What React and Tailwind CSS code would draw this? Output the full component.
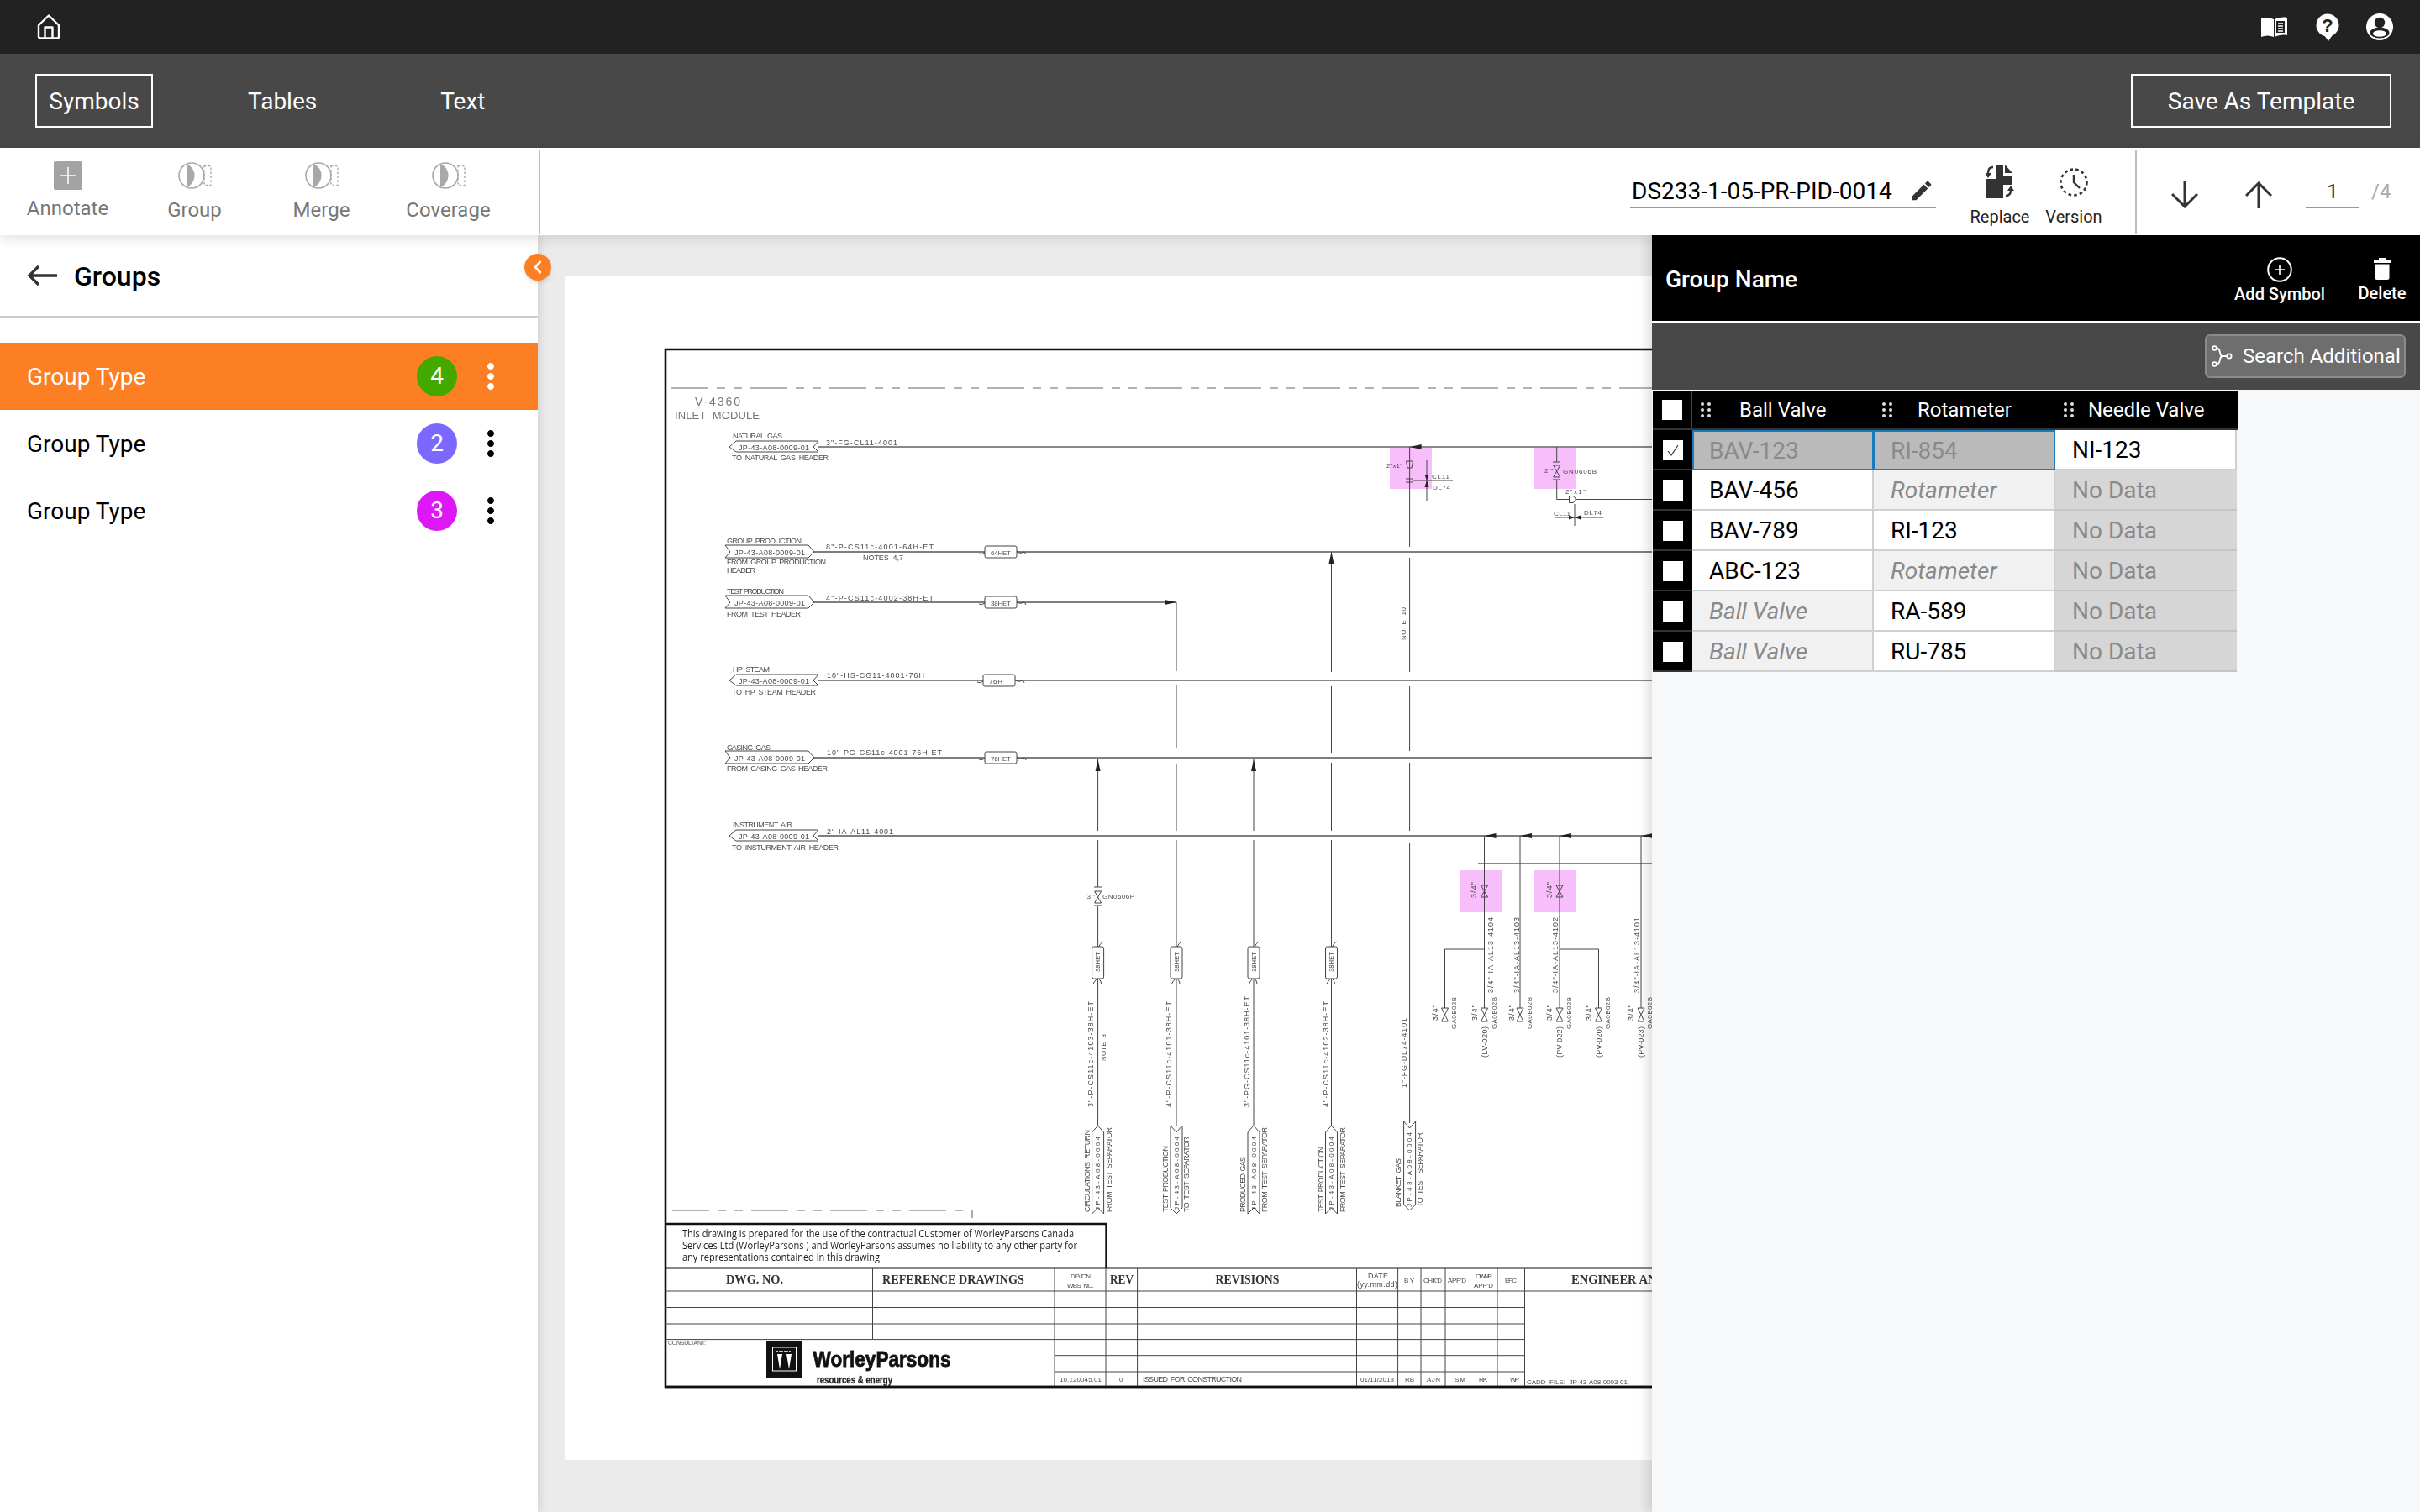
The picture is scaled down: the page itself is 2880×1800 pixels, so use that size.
import React from "react";
import { MdEdit, MdMoreVert } from "react-icons/md";

// ---------- small icons ----------
const HomeIcon = () => (
  <svg width="28" height="30" viewBox="0 0 28 30" fill="none" stroke="white" strokeWidth="2.4" strokeLinejoin="round">
    <path d="M14 1.5 L26 13 V26.5 Q26 28.5 24 28.5 H4 Q2 28.5 2 26.5 V13 Z" />
    <path d="M9.5 28 V15.5 H18.5 V28" />
  </svg>
);

const BookIcon = () => (
  <svg width="32" height="24" viewBox="0 0 32 24">
    <path d="M0 2 C5 0 10 1 15 3 V24 C10 22 5 22 0 24 Z" fill="white" />
    <path d="M16 3 C20 1 26 0 31 1 V22 C26 21 20 22 16 24 Z" fill="white" />
    <rect x="18" y="5" width="10" height="14" fill="#222" />
    <path d="M20 8 H26 M20 11 H26 M20 14 H26 M20 17 H26" stroke="white" strokeWidth="1.7" />
  </svg>
);

const HelpIcon = () => (
  <svg width="28" height="33" viewBox="0 0 28 33">
    <circle cx="14" cy="14" r="13.5" fill="white" />
    <path d="M10 26 L15 33 L21 24 Z" fill="white" />
    <text x="14" y="22" textAnchor="middle" fontSize="22" fontWeight="900" fontFamily="Liberation Sans" fill="#222">?</text>
  </svg>
);

const UserIcon = () => (
  <svg width="32" height="32" viewBox="0 0 32 32">
    <circle cx="16" cy="16" r="16" fill="white" />
    <circle cx="16" cy="11" r="6.2" fill="#222" />
    <ellipse cx="16" cy="23" rx="11.5" ry="6.5" fill="#222" />
    <ellipse cx="16" cy="24" rx="8" ry="3.8" fill="white" />
  </svg>
);

const AnnotateIcon = () => (
  <div className="w-[34px] h-[34px] bg-[#a3a3a3] rounded-[2px] flex items-center justify-center">
    <svg width="20" height="20" viewBox="0 0 20 20" stroke="white" strokeWidth="1.5">
      <path d="M10 0 V20 M0 10 H20" />
    </svg>
  </div>
);

const GroupIcon = () => (
  <svg width="40" height="32" viewBox="0 0 40 32" fill="none">
    <path d="M10 2 A15 15 0 0 1 10 30 Z" fill="#a8a8a8" />
    <circle cx="16" cy="16" r="15" stroke="#a8a8a8" strokeWidth="1.6" />
    <rect x="31" y="4.5" width="8" height="23" stroke="#a8a8a8" strokeWidth="1.4" strokeDasharray="2.5 2.5" />
  </svg>
);

const ReplaceIcon = () => (
  <svg width="34" height="40" viewBox="0 0 34 40" fill="#333">
    <path d="M12 0 H21 V13 H32 V24 H21 V40 H1 V17 H12 Z" />
    <path d="M23 0 L32 10 H23 Z" />
    <path d="M9 3 C4 3 3 6 3 11" fill="none" stroke="#333" strokeWidth="2.4" />
    <path d="M-1 10 H7 L3 16 Z" />
    <path d="M24 37 C29 37 30 34 30 30" fill="none" stroke="#333" strokeWidth="2.4" />
    <path d="M26 31 H34 L30 25 Z" />
  </svg>
);

const VersionIcon = () => (
  <svg width="34" height="34" viewBox="0 0 34 34" fill="none" stroke="#333">
    <circle cx="17" cy="17" r="15.5" strokeWidth="2.6" strokeDasharray="3.6 3.2" />
    <path d="M17 8 V17 L24 24" strokeWidth="2.4" />
  </svg>
);

const ArrowIcon = ({ up }) => (
  <svg width="32" height="32" viewBox="0 0 32 32" fill="none" stroke="#333" strokeWidth="3">
    {up ? <path d="M16 32 V2 M1 17 L16 2 L31 17" /> : <path d="M16 0 V30 M1 15 L16 30 L31 15" />}
  </svg>
);

const AddIcon = () => (
  <svg width="30" height="30" viewBox="0 0 30 30" fill="none" stroke="white">
    <circle cx="15" cy="15" r="13.8" strokeWidth="2" />
    <path d="M15 9 V21 M9 15 H21" strokeWidth="1.6" />
  </svg>
);

const TrashIcon = () => (
  <svg width="20" height="26" viewBox="0 0 20 26" fill="white">
    <rect x="6" y="0" width="8" height="2" />
    <rect x="0" y="2.5" width="20" height="3.5" />
    <path d="M1.5 7.5 H18.5 V23.5 Q18.5 26 16 26 H4 Q1.5 26 1.5 23.5 Z" />
  </svg>
);

const BranchIcon = () => (
  <svg width="25" height="26" viewBox="0 0 25 26" fill="none" stroke="white" strokeWidth="1.8">
    <circle cx="3.5" cy="3.5" r="2.4" />
    <circle cx="3.5" cy="22.5" r="2.4" />
    <circle cx="21" cy="13" r="2.6" />
    <path d="M6 3.5 C12 3.5 8 13 13 13 H18.4 M6 22.5 C12 22.5 8 13 13 13" />
  </svg>
);

const GripIcon = () => (
  <svg width="12" height="18" viewBox="0 0 12 18" fill="#ddd">
    <circle cx="2" cy="2" r="2" />
    <circle cx="10" cy="2" r="2" />
    <circle cx="2" cy="9" r="2" />
    <circle cx="10" cy="9" r="2" />
    <circle cx="2" cy="16" r="2" />
    <circle cx="10" cy="16" r="2" />
  </svg>
);

const CheckBox = ({ checked }) => (
  <div className="w-6 h-6 bg-white flex items-center justify-center">
    {checked && (
      <svg width="16" height="16" viewBox="0 0 16 16" fill="none" stroke="#333" strokeWidth="1.2">
        <path d="M2 9 L6 14 L14 2" />
      </svg>
    )}
  </div>
);

// ---------- drawing helpers (page coordinates) ----------
// CAD text: letter spaced to a measured width, words set apart by two spaces
const T = ({ x, y, w, s = 9, c = "#4a4a4a", up, children }) => (
  <text
    x={up ? x + s * 0.36 : x}
    y={y}
    fontSize={s}
    fill={c}
    stroke="none"
    fontFamily="Liberation Sans"
    textLength={w}
    lengthAdjust="spacing"
    xmlSpace="preserve"
    transform={up ? `rotate(-90 ${x + s * 0.36} ${y})` : undefined}
  >
    {String(children).replace(/ /g, "  ")}
  </text>
);

// Title block and logo text
const L = ({ x, y, w, s = 14, f = "Liberation Serif", c = "#333", b = true, sw = 0, children }) => (
  <text
    x={x}
    y={y}
    fontSize={s}
    fill={c}
    stroke={sw ? c : "none"}
    strokeWidth={sw}
    fontFamily={f}
    fontWeight={b ? 700 : 400}
    textLength={w}
    lengthAdjust="spacingAndGlyphs"
  >
    {children}
  </text>
);

const TagLeft = ({ y }) => <path d={`M868 ${y} L876 ${y - 7} H974 L968 ${y} L974 ${y + 6} H876 Z`} />;
const TagRight = ({ y }) => <path d={`M863 ${y - 8} H962 L969 ${y} L962 ${y + 7} H863 L869 ${y} Z`} />;
const TagUp = ({ x }) => <path d={`M${x} 1340 L${x + 7} 1348 V1445 L${x} 1438 L${x - 7} 1445 V1348 Z`} />;
const TagDown = ({ x, top = 1340, bottom = 1445 }) => (
  <path d={`M${x - 7} ${top} L${x} ${top + 8} L${x + 7} ${top} V${bottom - 7} L${x} ${bottom} L${x - 7} ${bottom - 7} Z`} />
);

const ArrowUp = ({ x, y }) => <polygon points={`${x},${y} ${x - 3},${y + 14} ${x + 3},${y + 14}`} fill="#222" stroke="none" />;
const ArrowLeft = ({ x, y }) => <polygon points={`${x},${y} ${x + 14},${y - 3} ${x + 14},${y + 3}`} fill="#222" stroke="none" />;

const Bow = ({ x, y, h = 14 }) => <path d={`M${x - 4} ${y} H${x + 4} L${x - 4} ${y + h} H${x + 4} Z`} />;

const HBox = ({ x, y, w = 38, label, lw = 24 }) => (
  <g>
    <rect x={x} y={y - 7} width={w} height={14} rx="2" fill="white" />
    <path d={`M${x} ${y + 1} q-4 3 -7 1 M${x + w} ${y - 1} q4 4 8 1 q3 1 3 3`} />
    <T x={x + 7} y={y + 3.5} w={lw} s={8}>{label}</T>
  </g>
);

const VBox = ({ x }) => (
  <g>
    <rect x={x - 7} y={1127} width={14} height={38} rx="2" fill="white" />
    <path d={`M${x + 1} 1127 q2 -4 5 -6 M${x - 1} 1165 q-3 3 -5 7 M${x + 1} 1165 q3 3 3 6`} />
    <T up x={x} y={1157} w={24} s={8}>38HET</T>
  </g>
);

const dash = "44 10 10 10 10 10";

const pipes = [
  [1677.6, 532, 1677.6, 651], [1677.6, 664, 1677.6, 800], [1677.6, 817, 1677.6, 894], [1677.6, 908, 1677.6, 989], [1677.6, 1003, 1677.6, 1337],
  [1584.5, 657, 1584.5, 800], [1584.5, 817, 1584.5, 897], [1584.5, 908, 1584.5, 989], [1584.5, 1000, 1584.5, 1340],
  [1400, 717, 1400, 799], [1400, 816, 1400, 891], [1400, 909, 1400, 989], [1400, 1000, 1400, 1340],
  [1306.6, 903, 1306.6, 989], [1306.6, 1000, 1306.6, 1056], [1306.6, 1078, 1306.6, 1340],
  [1492, 903, 1492, 989], [1492, 1000, 1492, 1340],
  [1766.5, 995, 1766.5, 1200], [1809, 995, 1809, 1200], [1856, 995, 1856, 1200], [1953, 995, 1953, 1200],
  [1719.5, 1130, 1766.5, 1130], [1719.5, 1130, 1719.5, 1200], [1856, 1130, 1902.5, 1130], [1902.5, 1130, 1902.5, 1200],
  [1681, 572, 1729, 572], [1698, 548, 1698, 597],
  [1852.7, 532, 1852.7, 550], [1852.7, 571, 1852.7, 594.5], [1852.7, 594.5, 1867, 594.5], [1875, 594.5, 1966, 594.5],
  [1874, 600, 1874, 626], [1850, 616, 1908, 616],
];

const vLabels = [
  { x: 1298, w: 126, t: '3"-P-CS11c-4103-38H-ET' },
  { x: 1391, w: 126, t: '4"-P-CS11c-4101-38H-ET' },
  { x: 1484, w: 132, t: '3"-PG-CS11c-4101-38H-ET' },
  { x: 1578, w: 126, t: '4"-P-CS11c-4102-38H-ET' },
];

const tagLabels = [
  { x: 1293.5, w: 98, t: "CIRCULATIONS RETURN" }, { x: 1320, w: 101, t: "FROM TEST SEPARATOR" },
  { x: 1387, w: 79, t: "TEST PRODUCTION" }, { x: 1412, w: 90, t: "TO TEST SEPARATOR" },
  { x: 1479, w: 66, t: "PRODUCED GAS" }, { x: 1505, w: 101, t: "FROM TEST SEPARATOR" },
  { x: 1571.5, w: 78, t: "TEST PRODUCTION" }, { x: 1597.5, w: 101, t: "FROM TEST SEPARATOR" },
];

const branchLabels = [
  { x: 1774, t: '3/4"-IA-AL13-4104' }, { x: 1805, t: '3/4"-IA-AL13-4103' },
  { x: 1851, t: '3/4"-IA-AL13-4102' }, { x: 1948, t: '3/4"-IA-AL13-4101' },
];

const lowerValves = [
  { x: 1719.5, s: 1708, g: 1730 },
  { x: 1766.5, s: 1754.4, g: 1778, n: "(LV-020)" },
  { x: 1809, s: 1799, g: 1820.5 },
  { x: 1856, s: 1844, g: 1867, n: "(PV-022)" },
  { x: 1902.5, s: 1891, g: 1913, n: "(PV-020)" },
  { x: 1953, s: 1941, g: 1963, n: "(PV-023)" },
];

const rowLines = [1537, 1556.5, 1576, 1594.6, 1613.7, 1633];
const colLines = [1316, 1353.6, 1614.5, 1663.6, 1691, 1720, 1749.5, 1782];

const Drawing = () => (
  <svg width="1294" height="1410" viewBox="672 328 1294 1410" className="block blur-[0.3px]">
    {/* highlighted symbols */}
    <g fill="#f8bdfb">
      <rect x="1654" y="532" width="50" height="50" />
      <rect x="1826" y="532" width="50" height="50" />
      <rect x="1738" y="1036" width="50" height="50" />
      <rect x="1826" y="1036" width="50" height="50" />
    </g>

    {/* frame */}
    <path d="M1966 416 H792 V1651 H1966" fill="none" stroke="#111" strokeWidth="2.6" />
    <path d="M799 462 H1966" stroke="#999" strokeWidth="1.6" strokeDasharray={dash} fill="none" />
    <path d="M800 1441 H1157 V1452" stroke="#999" strokeWidth="1.6" strokeDasharray={dash} fill="none" />
    <T x={827} y={483} w={54} s={14} c="#777">V-4360</T>
    <T x={803} y={499} w={101} s={13} c="#777">INLET MODULE</T>

    {/* horizontal headers */}
    <g fill="none" stroke="#888" strokeWidth="1.8">
      <path d="M974 532 H1966" />
      <path d="M974 810 H1966" />
      <path d="M1759 1028 H1966" />
    </g>
    <g fill="none" stroke="#555" strokeWidth="1.3">
      <path d="M969 657 H1966" />
      <path d="M969 717 H1400" />
      <path d="M969 902 H1966" />
      <path d="M974 995 H1966" />
    </g>

    {/* pipes and symbols */}
    <g fill="none" stroke="#444" strokeWidth="1">
      {pipes.map((p, i) => (
        <line key={i} x1={p[0]} y1={p[1]} x2={p[2]} y2={p[3]} />
      ))}
      <TagLeft y={532} />
      <TagRight y={657} />
      <TagRight y={717} />
      <TagLeft y={810} />
      <TagRight y={902} />
      <TagLeft y={995} />
      <HBox x={1172} y={657} label="64HET" />
      <HBox x={1172} y={717} label="38HET" />
      <HBox x={1170} y={810} label="76H" lw={16} />
      <HBox x={1172} y={902} label="76HET" />
      <VBox x={1306.6} />
      <VBox x={1400} />
      <VBox x={1492} />
      <VBox x={1584.5} />
      <TagUp x={1306.6} />
      <TagDown x={1400} />
      <TagUp x={1492} />
      <TagUp x={1584.5} />
      <TagDown x={1677.6} top={1335} bottom={1441} />

      {/* valves */}
      <Bow x={1306.6} y={1061} />
      <path d="M1302 1056 H1311 M1302 1078 H1311" />
      <Bow x={1852.7} y={554} />
      <path d="M1848 550 H1857 M1848 571 H1857" />
      <path d="M1673.5 549 H1681.5 L1680 557 H1675 Z M1673 570 H1682 M1673 574 H1682" />
      <path d="M1867.5 590.5 H1872 L1875 593 V596 L1872 598.5 H1867.5 Z" />
      <Bow x={1766.5} y={1054} />
      <Bow x={1856} y={1054} />
      {lowerValves.map((v) => (
        <Bow key={v.x} x={v.x} y={1200} h={16} />
      ))}
    </g>

    {/* arrow heads */}
    <ArrowUp x={1584.5} y={657} />
    <ArrowUp x={1306.6} y={904} />
    <ArrowUp x={1492} y={904} />
    <polygon points="1400,717 1386,714 1386,720" fill="#222" />
    <ArrowLeft x={1677.6} y={532} />
    <ArrowLeft x={1766.5} y={995} />
    <ArrowLeft x={1809} y={995} />
    <ArrowLeft x={1856} y={995} />
    <ArrowLeft x={1953} y={995} />
    <polygon points="1698,572 1695.5,565 1700.5,565" fill="#222" />
    <polygon points="1698,572 1695.5,580 1700.5,580" fill="#222" />
    <polygon points="1874,616 1867,613.5 1867,618.5" fill="#222" />
    <polygon points="1874,616 1881,613.5 1881,618.5" fill="#222" />

    {/* left side labels */}
    <T x={872} y={522} w={59}>NATURAL GAS</T>
    <T x={879} y={536} w={84}>JP-43-A08-0009-01</T>
    <T x={871} y={548} w={115}>TO NATURAL GAS HEADER</T>
    <T x={983} y={530} w={85}>3"-FG-CL11-4001</T>

    <T x={865} y={647} w={89}>GROUP PRODUCTION</T>
    <T x={874} y={661} w={84}>JP-43-A08-0009-01</T>
    <T x={865} y={672} w={118}>FROM GROUP PRODUCTION</T>
    <T x={865} y={682} w={34}>HEADER</T>
    <T x={983} y={654} w={128}>8"-P-CS11c-4001-64H-ET</T>
    <T x={1027} y={667} w={48}>NOTES 4,7</T>

    <T x={865} y={707} w={68}>TEST PRODUCTION</T>
    <T x={874} y={721} w={84}>JP-43-A08-0009-01</T>
    <T x={865} y={734} w={88}>FROM TEST HEADER</T>
    <T x={983} y={715} w={128}>4"-P-CS11c-4002-38H-ET</T>

    <T x={872} y={800} w={44}>HP STEAM</T>
    <T x={879} y={814} w={84}>JP-43-A08-0009-01</T>
    <T x={871} y={827} w={100}>TO HP STEAM HEADER</T>
    <T x={984} y={807} w={116}>10"-HS-CG11-4001-76H</T>

    <T x={865} y={893} w={52}>CASING GAS</T>
    <T x={874} y={906} w={84}>JP-43-A08-0009-01</T>
    <T x={865} y={918} w={120}>FROM CASING GAS HEADER</T>
    <T x={984} y={899} w={137}>10"-PG-CS11c-4001-76H-ET</T>

    <T x={872} y={985} w={71}>INSTRUMENT AIR</T>
    <T x={879} y={999} w={84}>JP-43-A08-0009-01</T>
    <T x={871} y={1012} w={127}>TO INSTURMENT AIR HEADER</T>
    <T x={984} y={993} w={79}>2"-IA-AL11-4001</T>

    {/* labels near the top symbols */}
    <T x={1650} y={557} w={19} s={8}>2"x1"</T>
    <T x={1704} y={569.5} w={21} s={8}>CL11</T>
    <T x={1705} y={582.5} w={21} s={8}>DL74</T>
    <T x={1838} y={563} w={10} s={8}>2"</T>
    <T x={1860} y={564} w={40} s={8}>GN0606B</T>
    <T x={1863} y={588} w={24} s={8}>2"x1"</T>
    <T x={1849} y={613.5} w={20} s={8}>CL11</T>
    <T x={1885} y={613} w={21} s={8}>DL74</T>
    <T up x={1670.6} y={762} w={39} s={8}>NOTE 10</T>
    <T x={1293.5} y={1070} w={10} s={8}>3"</T>
    <T x={1312} y={1070} w={38} s={8}>GN0606P</T>

    {/* vertical labels */}
    {vLabels.map((l) => (
      <T key={l.x} up x={l.x} y={1318} w={l.w}>{l.t}</T>
    ))}
    <T up x={1313} y={1263} w={32} s={8}>NOTE 8</T>
    <T up x={1670.6} y={1295} w={83}>1"-FG-DL74-4101</T>
    {tagLabels.map((l) => (
      <T key={l.x} up x={l.x} y={1443} w={l.w}>{l.t}</T>
    ))}
    {[1306.6, 1400, 1492, 1584.5].map((x) => (
      <T key={x} up x={x} y={1441} w={88} s={8}>JP-43-A08-0004</T>
    ))}
    <T up x={1663.6} y={1437} w={58}>BLANKET GAS</T>
    <T up x={1677.6} y={1437} w={89} s={8}>JP-43-A08-0004</T>
    <T up x={1690} y={1437} w={89}>TO TEST SEPARATOR</T>
    {branchLabels.map((l) => (
      <T key={l.x} up x={l.x} y={1182} w={90}>{l.t}</T>
    ))}
    <T up x={1754} y={1069} w={19}>3/4"</T>
    <T up x={1844} y={1069} w={19}>3/4"</T>
    {lowerValves.map((v) => (
      <g key={v.x}>
        <T up x={v.s} y={1215} w={19}>3/4"</T>
        <T up x={v.g} y={1225} w={38} s={8}>GA0B02B</T>
        {v.n && <T up x={v.x} y={1259} w={37}>{v.n}</T>}
      </g>
    ))}

    {/* note box */}
    <path d="M792 1457 H1316.6 V1509" fill="none" stroke="#111" strokeWidth="2.6" />
    <L x={812} y={1473} w={466} s={13} f="Open Sans" c="#222" b={false}>This drawing is prepared for the use of the contractual Customer of WorleyParsons Canada</L>
    <L x={812} y={1487} w={470} s={13} f="Open Sans" c="#222" b={false}>Services Ltd (WorleyParsons ) and WorleyParsons assumes no liability to any other party for</L>
    <L x={812} y={1501} w={235} s={13} f="Open Sans" c="#222" b={false}>any representations contained in this drawing</L>

    {/* title block */}
    <path d="M792 1509.5 H1966" stroke="#111" strokeWidth="2" />
    <g stroke="#444" strokeWidth="1" fill="none">
      <path d="M792 1537 H1966" />
      <path d="M792 1556.5 H1255 M792 1576 H1255 M792 1594.6 H1255" />
      {rowLines.slice(1).map((y) => (
        <path key={y} d={`M1255 ${y} H1814.5`} />
      ))}
      <path d="M1038.5 1510 V1594.6 M1255 1510 V1651 M1814.5 1510 V1651" />
      {colLines.map((x) => (
        <path key={x} d={`M${x} 1510 V1651`} />
      ))}
    </g>
    <L x={864} y={1528} w={68}>DWG.  NO.</L>
    <L x={1050} y={1528} w={169}>REFERENCE DRAWINGS</L>
    <T x={1274} y={1522} w={24} s={8}>DEVON</T>
    <T x={1270} y={1533} w={32} s={8}>WBS NO.</T>
    <L x={1321} y={1528} w={28}>REV</L>
    <L x={1446.5} y={1528} w={76}>REVISIONS</L>
    <T x={1628} y={1522} w={24}>DATE</T>
    <T x={1615} y={1532} w={48}>(yy.mm.dd)</T>
    <T x={1671} y={1527} w={12} s={8}>BY</T>
    <T x={1694} y={1527} w={22} s={8}>CHK'D</T>
    <T x={1723} y={1527} w={22} s={8}>APP'D</T>
    <T x={1756} y={1522} w={20} s={8}>OWNR</T>
    <T x={1754} y={1533} w={23} s={8}>APP'D</T>
    <T x={1791} y={1527} w={14} s={8}>EPC</T>
    <L x={1870} y={1528} w={112}>ENGINEER AND</L>
    <T x={1261} y={1645} w={50} s={8}>10.120045.01</T>
    <T x={1332} y={1645} w={5} s={8}>0</T>
    <T x={1360} y={1645} w={118}>ISSUED FOR CONSTRUCTION</T>
    <T x={1619} y={1645} w={40} s={8}>01/11/2018</T>
    <T x={1672} y={1645} w={11} s={8}>RB</T>
    <T x={1698} y={1645} w={16} s={8}>AJN</T>
    <T x={1731} y={1645} w={13} s={8}>SM</T>
    <T x={1760} y={1645} w={10} s={8}>RK</T>
    <T x={1797} y={1645} w={11} s={8}>WP</T>
    <T x={1817} y={1648} w={120} s={8}>CADD FILE: JP-43-A08-0003-01</T>
    <T x={795} y={1601} w={45} s={7}>CONSULTANT:</T>

    {/* logo */}
    <rect x="912" y="1597" width="43" height="43" fill="#111" />
    <rect x="919.5" y="1604" width="28" height="28" fill="none" stroke="white" strokeWidth="1" />
    <path d="M925 1612 L928 1630 L931 1612 Z M936 1612 L939 1630 L942 1612 Z" fill="white" />
    <path d="M924 1609 H943" stroke="white" strokeWidth="1.4" strokeDasharray="2 1" />
    <L x={967.5} y={1627} w={164} s={25} f="Liberation Sans" c="#111" sw={0.8}>WorleyParsons</L>
    <L x={972} y={1647} w={90} s={12} f="Liberation Sans" c="#222" sw={0.3}>resources &amp; energy</L>

    <path d="M792 1651 H1966" stroke="#111" strokeWidth="2.6" />
  </svg>
);

// ---------- data ----------
const tools = [
  { label: "Annotate", icon: <AnnotateIcon />, gap: "mt-[8px]" },
  { label: "Group", icon: <GroupIcon />, gap: "mt-[10px]" },
  { label: "Merge", icon: <GroupIcon />, gap: "mt-[10px]" },
  { label: "Coverage", icon: <GroupIcon />, gap: "mt-[10px]" },
];

const groups = [
  { count: 4, color: "bg-[#43a800]", active: true },
  { count: 2, color: "bg-[#7b68ff]" },
  { count: 3, color: "bg-[#dd17f5]" },
];

const columns = [
  { title: "Ball Valve", gap: "ml-[34px]" },
  { title: "Rotameter", gap: "ml-[30px]" },
  { title: "Needle Valve", gap: "ml-[17px]" },
];

// s = selected, v = value, p = placeholder, n = no data
const rows = [
  [["BAV-123", "s"], ["RI-854", "s"], ["NI-123", "v"]],
  [["BAV-456", "v"], ["Rotameter", "p"], ["No Data", "n"]],
  [["BAV-789", "v"], ["RI-123", "v"], ["No Data", "n"]],
  [["ABC-123", "v"], ["Rotameter", "p"], ["No Data", "n"]],
  [["Ball Valve", "p"], ["RA-589", "v"], ["No Data", "n"]],
  [["Ball Valve", "p"], ["RU-785", "v"], ["No Data", "n"]],
];

const cellStyles = {
  s: "bg-[#bababa] text-[#8a8a8a] border-2 border-[#1a7ac0] pl-[18px]",
  v: "bg-white text-black border-b-2 border-r-2 border-[#d0d0d0] pl-5",
  p: "bg-[#f1f1f1] text-[#8a8a8a] italic border-b-2 border-r-2 border-[#d0d0d0] pl-5",
  n: "bg-[#d6d6d6] text-[#8a8a8a] border-b-2 border-[#c4c4c4] pl-5",
};

const App = () => {
  return (
    <div className="w-[2880px] h-[1800px] flex flex-col overflow-hidden bg-white font-[Roboto,sans-serif]">
      {/* top bar */}
      <header className="h-16 shrink-0 bg-[#222222] flex items-center justify-between pl-[44px] pr-[32px]">
        <HomeIcon />
        <div className="flex items-center">
          <BookIcon />
          <div className="ml-[33px]"><HelpIcon /></div>
          <div className="ml-[32px]"><UserIcon /></div>
        </div>
      </header>

      {/* nav bar */}
      <nav className="h-[112px] shrink-0 bg-[#484848] flex items-center pl-[42px] pr-[34px] text-white text-[28px]">
        <button className="w-[140px] h-16 border-2 border-white pt-[2px]">Symbols</button>
        <span className="ml-[113px] pt-[2px]">Tables</span>
        <span className="ml-[147px] pt-[2px]">Text</span>
        <button className="ml-auto w-[310px] h-16 border-2 border-white pt-[2px]">Save As Template</button>
      </nav>

      {/* tool bar */}
      <div className="h-[104px] shrink-0 bg-white flex relative z-10 shadow-[0_4px_14px_rgba(0,0,0,0.12)]">
        <div className="w-[641px] flex pl-[5px]">
          {tools.map((tool) => (
            <div key={tool.label} className="w-[151px] flex flex-col items-center pt-4">
              <div className="h-[34px] flex items-center">{tool.icon}</div>
              <span className={`${tool.gap} h-7 leading-7 text-[24px] text-[#777777]`}>{tool.label}</span>
            </div>
          ))}
        </div>
        <div className="w-[2px] h-[100px] mt-[2px] bg-[#bdbdbd]" />
        <div className="flex-1 flex justify-end pr-[34px]">
          <div className="w-[364px] h-10 mt-8 mr-10 border-b-2 border-[#999999] flex items-center justify-between pl-[2px] pr-[2px]">
            <span className="text-[28px] leading-10 pt-[2px] text-black">DS233-1-05-PR-PID-0014</span>
            <MdEdit size={30} color="#333" />
          </div>
          <div className="w-[72px] mr-4 flex flex-col items-center pt-5">
            <div className="h-10"><ReplaceIcon /></div>
            <span className="mt-[8px] text-[20px] leading-7 text-[#222]">Replace</span>
          </div>
          <div className="w-[72px] flex flex-col items-center pt-5">
            <div className="h-10 pt-[4px]"><VersionIcon /></div>
            <span className="mt-[8px] text-[20px] leading-7 text-[#222]">Version</span>
          </div>
          <div className="w-[2px] h-[100px] mt-[2px] ml-[37px] mr-[41px] bg-[#bdbdbd]" />
          <div className="mt-10"><ArrowIcon /></div>
          <div className="mt-10 ml-14"><ArrowIcon up /></div>
          <div className="w-16 h-10 mt-8 ml-10 border-b-2 border-[#999999] text-center text-[24px] leading-10 text-[#333]">1</div>
          <span className="w-6 mt-8 ml-[14px] text-[24px] leading-10 text-[#aaaaaa]">/4</span>
        </div>
      </div>

      {/* body */}
      <div className="flex-1 flex min-h-0">
        <aside className="w-[640px] shrink-0 bg-white relative z-[5] shadow-[2px_0_10px_rgba(0,0,0,0.12)]">
          <div className="h-[98px] border-b-2 border-[#cccccc] flex items-center pl-8">
            <svg width="36" height="26" viewBox="0 0 36 26" fill="none" stroke="#333" strokeWidth="3.4">
              <path d="M36 13 H3 M14 2 L3 13 L14 24" />
            </svg>
            <span className="ml-[20px] pt-[2px] text-[32px] font-medium text-black">Groups</span>
          </div>
          <ul className="mt-[30px]">
            {groups.map((group, index) => (
              <li
                key={index}
                className={`h-20 flex items-center pl-8 text-[28px] ${group.active ? "bg-[#fd7f23] text-white" : "text-black"}`}
              >
                <span className="pt-[2px]">Group Type</span>
                <span className={`ml-auto w-12 h-12 rounded-full flex items-center justify-center text-white ${group.color}`}>
                  {group.count}
                </span>
                <MdMoreVert size={48} className="ml-4 mr-8" />
              </li>
            ))}
          </ul>
          {/* sidebar collapse toggle */}
          <button className="absolute top-[22px] -right-4 w-8 h-8 rounded-full bg-[#fd7f23] flex items-center justify-center shadow-md">
            <svg width="12" height="18" viewBox="0 0 12 18" fill="none" stroke="white" strokeWidth="2.6">
              <path d="M9.5 2 L3 9 L9.5 16" />
            </svg>
          </button>
        </aside>

        <main className="w-[1326px] shrink-0 bg-[#ebebeb] pt-12 pl-8 overflow-hidden">
          <div className="bg-white h-[1410px] w-[1294px]">
            <Drawing />
          </div>
        </main>

        {/* group panel */}
        <section className="flex-1 bg-[#f7f8fa] relative z-[5] shadow-[-6px_0_12px_rgba(0,0,0,0.12)]">
          <div className="h-[102px] bg-black text-white flex items-center pl-4">
            <span className="pt-[3px] text-[28px] font-medium">Group Name</span>
            <div className="ml-auto w-[116px] flex flex-col items-center pt-[7px]">
              <AddIcon />
              <span className="text-[20px] leading-7 font-medium">Add Symbol</span>
            </div>
            <div className="ml-[34px] mr-[15px] w-[60px] flex flex-col items-center pt-[7px]">
              <TrashIcon />
              <span className="mt-[2px] text-[20px] leading-7 font-medium">Delete</span>
            </div>
          </div>
          <div className="h-[2px] bg-white" />
          <div className="h-[80px] bg-[#484848] flex justify-end pt-[14px] pr-[17px]">
            <button className="w-[239px] h-[52px] bg-[#6e6e6e] border-2 border-[#8b8b8b] rounded-[6px] flex items-center pl-[6px] text-white text-[24px]">
              <BranchIcon />
              <span className="ml-[12px]">Search Additional</span>
            </button>
          </div>

          {/* symbols table */}
          <div className="mt-[2px] ml-px w-[696px] text-[28px]">
            <div className="h-[46px] bg-black border-b-2 border-[#333333] flex text-white text-[24px]">
              <div className="w-[47px] border-r-2 border-[#444444] flex items-center justify-center">
                <CheckBox />
              </div>
              {columns.map((col) => (
                <div key={col.title} className="w-[216px] flex items-center pl-[10px]">
                  <GripIcon />
                  <span className={col.gap}>{col.title}</span>
                </div>
              ))}
            </div>
            {rows.map((row, i) => (
              <div key={i} className="h-12 flex">
                <div className="w-[47px] bg-black border-b-2 border-[#333333] pt-[2px] flex items-center justify-center">
                  <CheckBox checked={i === 0} />
                </div>
                {row.map(([text, kind], j) => (
                  <div key={j} className={`w-[216px] flex items-center pt-[2px] ${cellStyles[kind]}`}>
                    {text}
                  </div>
                ))}
              </div>
            ))}
          </div>
        </section>
      </div>
    </div>
  );
};

export default App;
